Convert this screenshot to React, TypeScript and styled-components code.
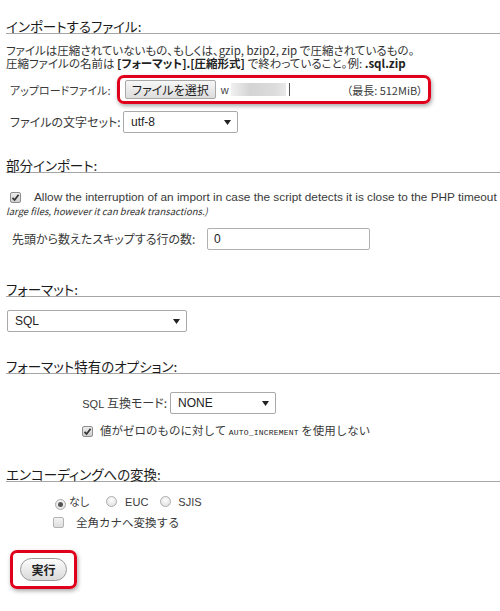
import { styled, createGlobalStyle } from "styled-components";

const JP = `"Noto Sans CJK JP", "Noto Sans", sans-serif`;
const LAT = `"Liberation Sans", Arial, sans-serif`;

const GlobalStyle = createGlobalStyle`
  html, body {
    margin: 0;
    padding: 0;
    overflow: hidden;
    background: #fff;
  }
`;

const Page = styled.div`
  width: 494px;
  padding: 20px 0 20px 6px;
  font-family: ${JP};
  font-feature-settings: "palt";
  font-size: 12px;
  color: #333;
`;

const Fieldset = styled.section<{ $mt: number }>`
  margin-top: ${(p) => p.$mt}px;
`;

const Legend = styled.h2`
  margin: 0;
  font-size: 13.5px;
  font-weight: 400;
  line-height: 13px;
  color: #1a1a1a;
  border-bottom: 1px solid #a6a6a6;
`;

const Para = styled.p`
  margin: 10px 0 0;
  font-size: 11.5px;
  line-height: 12.5px;
  color: #333;
  white-space: nowrap;

  b {
    font-weight: 700;
    color: #222;
  }
`;

const FieldRow = styled.div<{ $mt: number; $pl?: number }>`
  display: flex;
  align-items: center;
  margin-top: ${(p) => p.$mt}px;
  padding-left: ${(p) => p.$pl ?? 4}px;
`;

const Label = styled.span<{ $w?: number; $right?: boolean; $fs?: number }>`
  flex: none;
  font-size: ${(p) => p.$fs ?? 12}px;
  line-height: 14px;
  color: #3a3a3a;
  white-space: nowrap;
  width: ${(p) => (p.$w ? `${p.$w}px` : "auto")};
  text-align: ${(p) => (p.$right ? "right" : "left")};
`;

// 赤枠 (スクリーンショット上の注釈)
const Highlight = styled.div<{ $px: number; $py: number }>`
  display: inline-flex;
  align-items: center;
  padding: ${(p) => p.$py}px ${(p) => p.$px}px;
  border: 3px solid #e1001b;
  border-radius: 7px;
  box-shadow: 1px 2px 4px rgba(0, 0, 0, 0.35);
`;

const FileButton = styled.button`
  height: 19px;
  padding: 0 6px;
  border: 1px solid #a8a8a8;
  border-radius: 2px;
  background: linear-gradient(#f7f7f7, #dcdcdc);
  font-family: ${JP};
  font-feature-settings: "palt";
  font-size: 12px;
  line-height: 17px;
  color: #222;
`;

const FileName = styled.div`
  display: flex;
  align-items: center;
  width: 126px;
  margin-left: 5px;
  font-family: ${LAT};
  font-size: 11px;
  color: #444;
`;

const Blur = styled.span`
  width: 55px;
  height: 13px;
  margin-left: 2px;
  background: linear-gradient(90deg, #f0f0f0, #d4d4d4 35%, #dcdcdc 80%, #e8e8e8);
  filter: blur(0.6px);
`;

const Caret = styled.span`
  width: 1px;
  height: 13px;
  margin-left: 3px;
  background: #555;
`;

const MaxSize = styled.span`
  font-size: 11px;
  color: #3a3a3a;
  white-space: nowrap;
`;

const Select = styled.div<{ $w: number; $ml?: number }>`
  display: flex;
  align-items: center;
  justify-content: space-between;
  box-sizing: border-box;
  width: ${(p) => p.$w}px;
  height: 22px;
  margin-left: ${(p) => p.$ml ?? 0}px;
  padding: 0 6px 0 7px;
  border: 1px solid #a9a9a9;
  border-radius: 2px;
  background: #fff;
  font-family: ${LAT};
  font-size: 12px;
  color: #222;
`;

const TextInput = styled.input`
  box-sizing: border-box;
  width: 163px;
  height: 22px;
  padding: 0 6px;
  border: 1px solid #b0b0b0;
  border-radius: 2px;
  font-family: ${LAT};
  font-size: 12px;
  color: #222;
  outline: none;
`;

const CheckLine = styled.div<{ $mt: number; $pl: number; $plain?: boolean }>`
  margin-top: ${(p) => p.$mt}px;
  padding-left: ${(p) => p.$pl}px;
  font-size: ${(p) => (p.$plain ? 11.5 : 11)}px;
  font-feature-settings: ${(p) => (p.$plain ? "normal" : '"palt"')};
  line-height: 13px;
  color: #3a3a3a;
  white-space: nowrap;
`;

const Box = styled.span<{ $checked?: boolean; $ml?: number; $mr: number }>`
  display: inline-flex;
  align-items: center;
  justify-content: center;
  box-sizing: border-box;
  width: 11px;
  height: 11px;
  margin-left: ${(p) => p.$ml ?? 0}px;
  margin-right: ${(p) => p.$mr}px;
  vertical-align: -1px;
  border: 1px solid ${(p) => (p.$checked ? "#8e8e8e" : "#b3b3b3")};
  border-radius: 2px;
  background: ${(p) =>
    p.$checked ? "linear-gradient(#ededed, #cfcfcf)" : "linear-gradient(#f3f3f3, #dedede)"};
`;

const Radio = styled.span<{ $on?: boolean; $mr: number }>`
  display: inline-flex;
  align-items: center;
  justify-content: center;
  box-sizing: border-box;
  width: 11px;
  height: 11px;
  margin-right: ${(p) => p.$mr}px;
  vertical-align: -1px;
  border: 1px solid #acacac;
  border-radius: 50%;
  background: radial-gradient(circle at 50% 35%, #fdfdfd, #dcdcdc);

  &::after {
    content: "";
    display: ${(p) => (p.$on ? "block" : "none")};
    width: 5px;
    height: 5px;
    border-radius: 50%;
    background: #555;
  }
`;

const RadioItem = styled.span<{ $mr: number }>`
  margin-right: ${(p) => p.$mr}px;
`;

const Latin = styled.span<{ $fs?: number }>`
  font-family: ${LAT};
  font-size: ${(p) => p.$fs ?? 11}px;
`;

const Mono = styled.span`
  font-family: "Liberation Mono", monospace;
  font-size: 8px;
  letter-spacing: 0.2px;
  color: #222;
`;

const Note = styled.i<{ $fs?: number }>`
  font-size: ${(p) => p.$fs ?? 9.5}px;
  color: #333;
`;

const SubmitButton = styled.button`
  width: 47px;
  height: 23px;
  padding: 0;
  border: 1px solid #9a9a9a;
  border-radius: 12px;
  background: linear-gradient(#fcfcfc, #dadada);
  font-family: ${JP};
  font-size: 12px;
  font-weight: 700;
  color: #222;
`;

function Check({ checked, ml, mr }: { checked?: boolean; ml?: number; mr: number }) {
  return (
    <Box $checked={checked} $ml={ml} $mr={mr}>
      {checked ? (
        <svg width="9" height="9" viewBox="0 0 9 9">
          <path d="M1.5 4.8 L3.6 7 L7.6 1.8" fill="none" stroke="#333" strokeWidth="1.7" />
        </svg>
      ) : null}
    </Box>
  );
}

function Arrow() {
  return (
    <svg width="7" height="5" viewBox="0 0 7 5">
      <polygon points="0,0 7,0 3.5,5" fill="#222" />
    </svg>
  );
}

export default function App() {
  return (
    <>
      <GlobalStyle />
      <Page>
        <Fieldset $mt={0}>
          <Legend>インポートするファイル:</Legend>
          <Para>
            ファイルは圧縮されていないもの、もしくは、gzip, bzip2, zip で圧縮されているもの。
            <br />
            圧縮ファイルの名前は <b>[フォーマット].[圧縮形式]</b> で終わっていること。例: <b>.sql.zip</b>
          </Para>
          <FieldRow $mt={6}>
            <Label $w={107} $fs={11}>
              アップロードファイル:
            </Label>
            <Highlight $px={5} $py={2}>
              <FileButton type="button">ファイルを選択</FileButton>
              <FileName>
                w<Blur />
                <Caret />
              </FileName>
              <MaxSize>（最長: 512MiB）</MaxSize>
            </Highlight>
          </FieldRow>
          <FieldRow $mt={7}>
            <Label $w={113}>ファイルの文字セット:</Label>
            <Select $w={115}>
              utf-8
              <Arrow />
            </Select>
          </FieldRow>
        </Fieldset>

        <Fieldset $mt={26}>
          <Legend>部分インポート:</Legend>
          <CheckLine $mt={17} $pl={0}>
            <Check checked ml={4} mr={13} />
            <Latin $fs={11.8}>
              Allow the interruption of an import in case the script detects it is close to the PHP timeout
              limit. <Note $fs={11}>(This might be a good way to import</Note>
            </Latin>
            <br />
            <Note>large files, however it can break transactions.)</Note>
          </CheckLine>
          <FieldRow $mt={10} $pl={6}>
            <Label $w={195}>先頭から数えたスキップする行の数:</Label>
            <TextInput readOnly defaultValue="0" />
          </FieldRow>
        </Fieldset>

        <Fieldset $mt={33}>
          <Legend>フォーマット:</Legend>
          <FieldRow $mt={13} $pl={1}>
            <Select $w={180}>
              SQL
              <Arrow />
            </Select>
          </FieldRow>
        </Fieldset>

        <Fieldset $mt={28}>
          <Legend>フォーマット特有のオプション:</Legend>
          <FieldRow $mt={18} $pl={0}>
            <Label $w={161} $right>
              <Latin>SQL</Latin> 互換モード:
            </Label>
            <Select $w={106} $ml={3}>
              NONE
              <Arrow />
            </Select>
          </FieldRow>
          <CheckLine $mt={10} $pl={76} $plain>
            <Check checked mr={7} />
            値がゼロのものに対して <Mono>AUTO_INCREMENT</Mono> を使用しない
          </CheckLine>
        </Fieldset>

        <Fieldset $mt={29}>
          <Legend>エンコーディングへの変換:</Legend>
          <CheckLine $mt={13} $pl={49}>
            <RadioItem $mr={17}>
              <Radio $on $mr={3} />
              なし
            </RadioItem>
            <RadioItem $mr={12}>
              <Radio $mr={8} />
              <Latin>EUC</Latin>
            </RadioItem>
            <RadioItem $mr={0}>
              <Radio $mr={7} />
              <Latin>SJIS</Latin>
            </RadioItem>
          </CheckLine>
          <CheckLine $mt={6} $pl={47} $plain>
            <Check mr={12} />
            全角カナへ変換する
          </CheckLine>
        </Fieldset>

        <FieldRow $mt={21} $pl={4}>
          <Highlight $px={7} $py={5}>
            <SubmitButton type="button">実行</SubmitButton>
          </Highlight>
        </FieldRow>
      </Page>
    </>
  );
}
